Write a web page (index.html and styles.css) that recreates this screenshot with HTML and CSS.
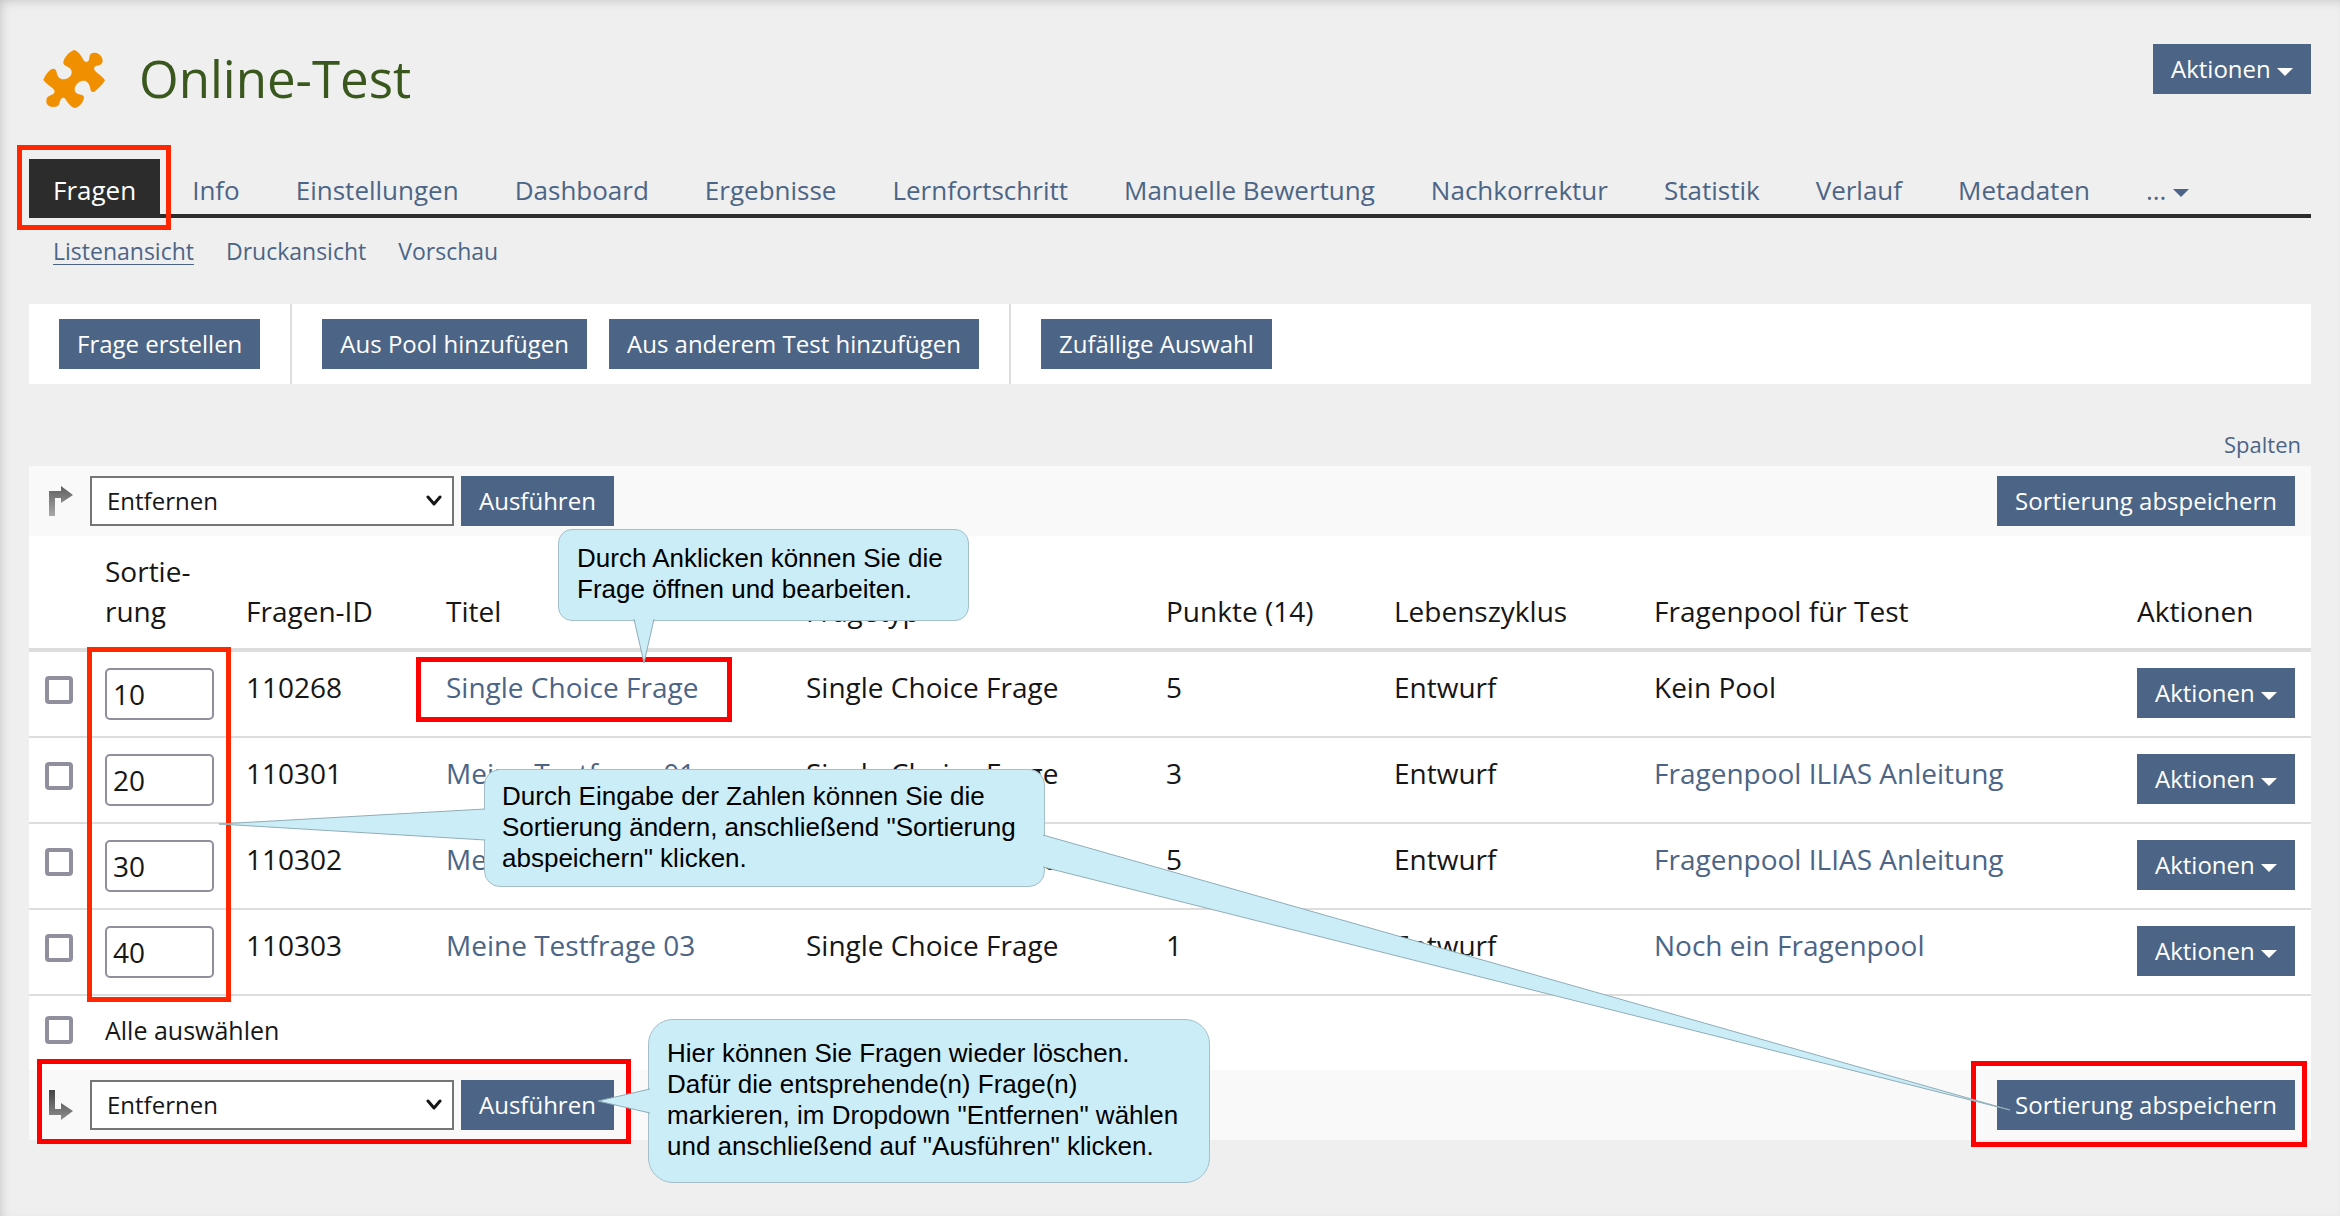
FILE: index.html
```html
<!DOCTYPE html>
<html lang="de">
<head>
<meta charset="utf-8">
<meta name="viewport" content="width=device-width, initial-scale=1">
<title>Online-Test</title>
<link rel="stylesheet" href="styles.css">
</head>
<body>
<div class="page">
  <header class="page-header">
    <svg class="object-icon" viewBox="39 30 186 174" aria-hidden="true"><path d="M40 119C45 108 54 94 64 88C73 84 78 88 80 97C82 112 91 119 102 118C116 116 126 107 125 95C124 80 104 82 100 70C99 56 116 36 132 30C146 34 153 46 159 58C166 70 177 68 178 54C178 42 184 37 196 38C208 40 218 50 218 63C216 82 194 72 192 85C192 96 214 104 225 121C218 133 204 148 192 156C184 158 181 151 180 142C176 126 166 121 156 123C142 126 134 138 134 150C136 168 158 160 162 170C162 184 150 200 134 204C120 200 112 186 106 177C99 169 92 176 89 187C88 198 80 201 68 201C54 200 48 192 49 180C52 162 72 170 74 154C72 142 48 134 40 119Z"/></svg>
    <h1 class="page-title">Online-Test</h1>
    <button type="button" class="btn">Aktionen <span class="caret"></span></button>
  </header>

  <nav class="tabs" aria-label="Reiter">
    <a class="tab tab-active" href="#">Fragen</a>
    <a class="tab" href="#">Info</a>
    <a class="tab" href="#">Einstellungen</a>
    <a class="tab" href="#">Dashboard</a>
    <a class="tab" href="#">Ergebnisse</a>
    <a class="tab" href="#">Lernfortschritt</a>
    <a class="tab" href="#">Manuelle Bewertung</a>
    <a class="tab" href="#">Nachkorrektur</a>
    <a class="tab" href="#">Statistik</a>
    <a class="tab" href="#">Verlauf</a>
    <a class="tab" href="#">Metadaten</a>
    <a class="tab" href="#">... <span class="caret"></span></a>
  </nav>
  <nav class="subtabs" aria-label="Ansichten">
    <a class="subtab subtab-active" href="#">Listenansicht</a>
    <a class="subtab" href="#">Druckansicht</a>
    <a class="subtab" href="#">Vorschau</a>
  </nav>

  <div class="toolbar">
    <div class="toolbar-group"><button type="button" class="btn">Frage erstellen</button></div>
    <div class="toolbar-group"><button type="button" class="btn">Aus Pool hinzufügen</button><button type="button" class="btn">Aus anderem Test hinzufügen</button></div>
    <div class="toolbar-group"><button type="button" class="btn">Zufällige Auswahl</button></div>
  </div>

  <div class="table-options"><a href="#">Spalten</a></div>

  <form class="questions">
    <div class="command-row">
      <svg class="arrow" viewBox="0 0 24 30" aria-hidden="true"><defs><linearGradient id="fade-up" x1="0" y1="0" x2="0" y2="1"><stop offset="0" stop-color="#5f5f5f"/><stop offset="1" stop-color="#a8a8a8"/></linearGradient></defs><path fill="url(#fade-up)" d="M0 5H12V0L24 9L12 17V12H6V30H0Z"/></svg>
      <select class="select" aria-label="Aktion oben"><option>Entfernen</option></select>
      <button type="button" class="btn">Ausführen</button>
      <button type="button" class="btn btn-end">Sortierung abspeichern</button>
    </div>
    <table class="table">
      <colgroup><col class="col-check"><col class="col-order"><col class="col-id"><col class="col-title"><col class="col-type"><col class="col-points"><col class="col-state"><col class="col-pool"><col class="col-actions"></colgroup>
      <thead>
        <tr><th></th><th>Sortie&shy;rung</th><th>Fragen-ID</th><th>Titel</th><th>Fragetyp</th><th>Punkte (14)</th><th>Lebenszyklus</th><th>Fragenpool für Test</th><th>Aktionen</th></tr>
      </thead>
      <tbody>
        <tr><td><input type="checkbox" class="check" aria-label="Frage 110268 auswählen"></td><td><input type="text" class="order" value="10" aria-label="Position 110268"></td><td>110268</td><td><a href="#">Single Choice Frage</a></td><td>Single Choice Frage</td><td>5</td><td>Entwurf</td><td>Kein Pool</td><td><button type="button" class="btn">Aktionen <span class="caret"></span></button></td></tr>
        <tr><td><input type="checkbox" class="check" aria-label="Frage 110301 auswählen"></td><td><input type="text" class="order" value="20" aria-label="Position 110301"></td><td>110301</td><td><a href="#">Meine Testfrage 01</a></td><td>Single Choice Frage</td><td>3</td><td>Entwurf</td><td><a href="#">Fragenpool ILIAS Anleitung</a></td><td><button type="button" class="btn">Aktionen <span class="caret"></span></button></td></tr>
        <tr><td><input type="checkbox" class="check" aria-label="Frage 110302 auswählen"></td><td><input type="text" class="order" value="30" aria-label="Position 110302"></td><td>110302</td><td><a href="#">Meine Testfrage 02</a></td><td>Single Choice Frage</td><td>5</td><td>Entwurf</td><td><a href="#">Fragenpool ILIAS Anleitung</a></td><td><button type="button" class="btn">Aktionen <span class="caret"></span></button></td></tr>
        <tr><td><input type="checkbox" class="check" aria-label="Frage 110303 auswählen"></td><td><input type="text" class="order" value="40" aria-label="Position 110303"></td><td>110303</td><td><a href="#">Meine Testfrage 03</a></td><td>Single Choice Frage</td><td>1</td><td>Entwurf</td><td><a href="#">Noch ein Fragenpool</a></td><td><button type="button" class="btn">Aktionen <span class="caret"></span></button></td></tr>
      </tbody>
    </table>
    <div class="select-all">
      <input type="checkbox" class="check" id="select-all">
      <label for="select-all">Alle auswählen</label>
    </div>
    <div class="command-row">
      <svg class="arrow" viewBox="0 0 24 30" aria-hidden="true"><defs><linearGradient id="fade-down" x1="0" y1="0" x2="0" y2="1"><stop offset="0" stop-color="#454545"/><stop offset="1" stop-color="#8e8e8e"/></linearGradient></defs><path fill="url(#fade-down)" d="M0 0H6V19H12V13L24 21L12 30V25H0Z"/></svg>
      <select class="select" aria-label="Aktion unten"><option>Entfernen</option></select>
      <button type="button" class="btn">Ausführen</button>
      <button type="button" class="btn btn-end">Sortierung abspeichern</button>
    </div>
  </form>

  <div class="marker marker-tab"></div>
  <div class="marker marker-order"></div>
  <div class="marker marker-title"></div>
  <div class="marker marker-remove"></div>
  <div class="marker marker-save"></div>

  <p class="callout callout-open">Durch Anklicken können Sie die<br>Frage öffnen und bearbeiten.</p>
  <p class="callout callout-sort">Durch Eingabe der Zahlen können Sie die<br>Sortierung ändern, anschließend "Sortierung<br>abspeichern" klicken.</p>
  <p class="callout callout-remove">Hier können Sie Fragen wieder löschen.<br>Dafür die entsprehende(n) Frage(n)<br>markieren, im Dropdown "Entfernen" wählen<br>und anschließend auf "Ausführen" klicken.</p>
  <svg class="tails" viewBox="0 0 2340 1217" aria-hidden="true">
    <path d="M634 619L644 663L654 619"/>
    <path d="M485 809L219 824L485 840"/>
    <path d="M1043 835L2010 1110L1043 867"/>
    <path d="M650 1089L598 1101L650 1113"/>
  </svg>
</div>
</body>
</html>
```
FILE: styles.css
```css
* { box-sizing: border-box; }

body {
  margin: 0;
  background: #fff;
  color: #161616;
  font-family: "Open Sans", "Noto Sans", sans-serif;
  font-size: 28px;
  line-height: 40px;
}

a { color: #4c6586; text-decoration: none; }

.page {
  position: relative;
  overflow: hidden;
  min-height: calc(100vh - 1px);
  padding: 44px 29px 0;
  background: #efefef;
  box-shadow: inset 4px 4px 12px -4px rgba(0, 0, 0, 0.2);
}

.page-header { display: flex; align-items: flex-start; height: 115px; }
.object-icon { width: 62px; height: 58px; margin: 6px 34px 0 14px; fill: #f09000; }
.page-title {
  margin: 0 auto 0 0;
  color: #3a571e;
  font-size: 51px;
  font-weight: 400;
  line-height: 68px;
}

.btn {
  height: 50px;
  padding: 0 18px;
  border: 0;
  background: #4c6586;
  color: #fff;
  font: inherit;
  font-size: 24px;
  line-height: 50px;
  white-space: nowrap;
}
.caret {
  display: inline-block;
  border: 8px solid transparent;
  border-top-color: currentColor;
  border-bottom: 0;
  vertical-align: middle;
}

.tabs { display: flex; gap: 8px; border-bottom: 4px solid #2c2c2c; }
.tab { height: 55px; padding: 11px 24px 4px; font-size: 26px; white-space: nowrap; }
.tab-active { background: #2c2c2c; color: #fff; }

.subtabs { display: flex; gap: 32px; padding: 13px 24px 0; }
.subtab { font-size: 23px; line-height: 40px; }
.subtab-active { text-decoration: underline; text-underline-offset: 4px; text-decoration-thickness: 1px; }

.toolbar { display: flex; margin-top: 33px; background: #fff; }
.toolbar-group { display: flex; gap: 22px; padding: 15px 30px; }
.toolbar-group + .toolbar-group { border-left: 2px solid #ddd; }

.table-options { padding: 40px 10px 2px; text-align: right; font-size: 22px; }

.questions { background: #fff; }
.command-row { display: flex; align-items: center; padding: 10px 16px 10px 20px; background: #f9f9f9; }
.arrow { width: 24px; height: 30px; margin-right: 17px; }
.select {
  appearance: none;
  width: 364px;
  height: 50px;
  margin-right: 7px;
  padding: 0 15px;
  border: 2px solid #757575;
  border-radius: 0;
  background: #fff url("data:image/svg+xml,%3Csvg xmlns='http://www.w3.org/2000/svg' width='16' height='12' viewBox='0 0 16 12'%3E%3Cpath d='M2 2l6 7 6-7' fill='none' stroke='%23161616' stroke-width='3' stroke-linecap='round' stroke-linejoin='round'/%3E%3C/svg%3E") no-repeat right 10px center;
  color: #161616;
  font: inherit;
  font-size: 24px;
}
.btn-end { margin-left: auto; }

.table { width: 100%; border-collapse: separate; border-spacing: 0; table-layout: fixed; }
.table th { padding: 15px 16px 17px; border-bottom: 4px solid #ddd; font-weight: 400; text-align: left; vertical-align: bottom; }
.table td { height: 86px; padding: 15px 16px; border-bottom: 2px solid #ddd; vertical-align: top; }
.col-check { width: 60px; }
.col-order { width: 141px; }
.col-id { width: 200px; }
.col-title { width: 360px; }
.col-type { width: 360px; }
.col-points { width: 228px; }
.col-state { width: 260px; }
.col-actions { width: 190px; }
.table .btn, .order { display: block; margin-top: 1px; }

.check {
  appearance: none;
  display: block;
  width: 28px;
  height: 28px;
  margin: 9px 0 8px;
  border: 4px solid #8f8f9d;
  border-radius: 4px;
  background: #fff;
}
.order {
  width: 109px;
  height: 52px;
  padding: 0 6px;
  border: 2px solid #8f8f9d;
  border-radius: 5px;
  background: #fff;
  color: #161616;
  font: inherit;
}

.select-all { display: flex; align-items: center; gap: 32px; padding: 11px 16px 18px; font-size: 25px; }

/* Annotations lie over the page */
.marker { position: absolute; border: 5px solid #f00; pointer-events: none; }
.marker-tab { left: 17px; top: 145px; width: 154px; height: 85px; border-color: #ff2600; }
.marker-order { left: 87px; top: 647px; width: 144px; height: 355px; border-color: #ff2600; }
.marker-title { left: 416px; top: 657px; width: 316px; height: 65px; }
.marker-remove { left: 37px; top: 1059px; width: 594px; height: 85px; }
.marker-save { right: 33px; top: 1061px; width: 336px; height: 86px; }

.callout {
  position: absolute;
  margin: 0;
  border: 1px solid #a5bfc8;
  background: #cbedf8;
  color: #000;
  font-family: "Liberation Sans", Arial, sans-serif;
  font-size: 26px;
  line-height: 31px;
  white-space: nowrap;
}
.callout-open { left: 558px; top: 529px; width: 411px; height: 92px; padding: 13px 18px; border-radius: 14px; }
.callout-sort { left: 484px; top: 769px; width: 561px; height: 118px; padding: 11px 17px; border-radius: 16px; }
.callout-remove { left: 648px; top: 1019px; width: 562px; height: 164px; padding: 18px; border-radius: 25px; }
.tails {
  position: absolute;
  left: 0;
  top: 0;
  width: 2340px;
  height: 1217px;
  fill: #cbedf8;
  stroke: #8fadb7;
  pointer-events: none;
}
```
